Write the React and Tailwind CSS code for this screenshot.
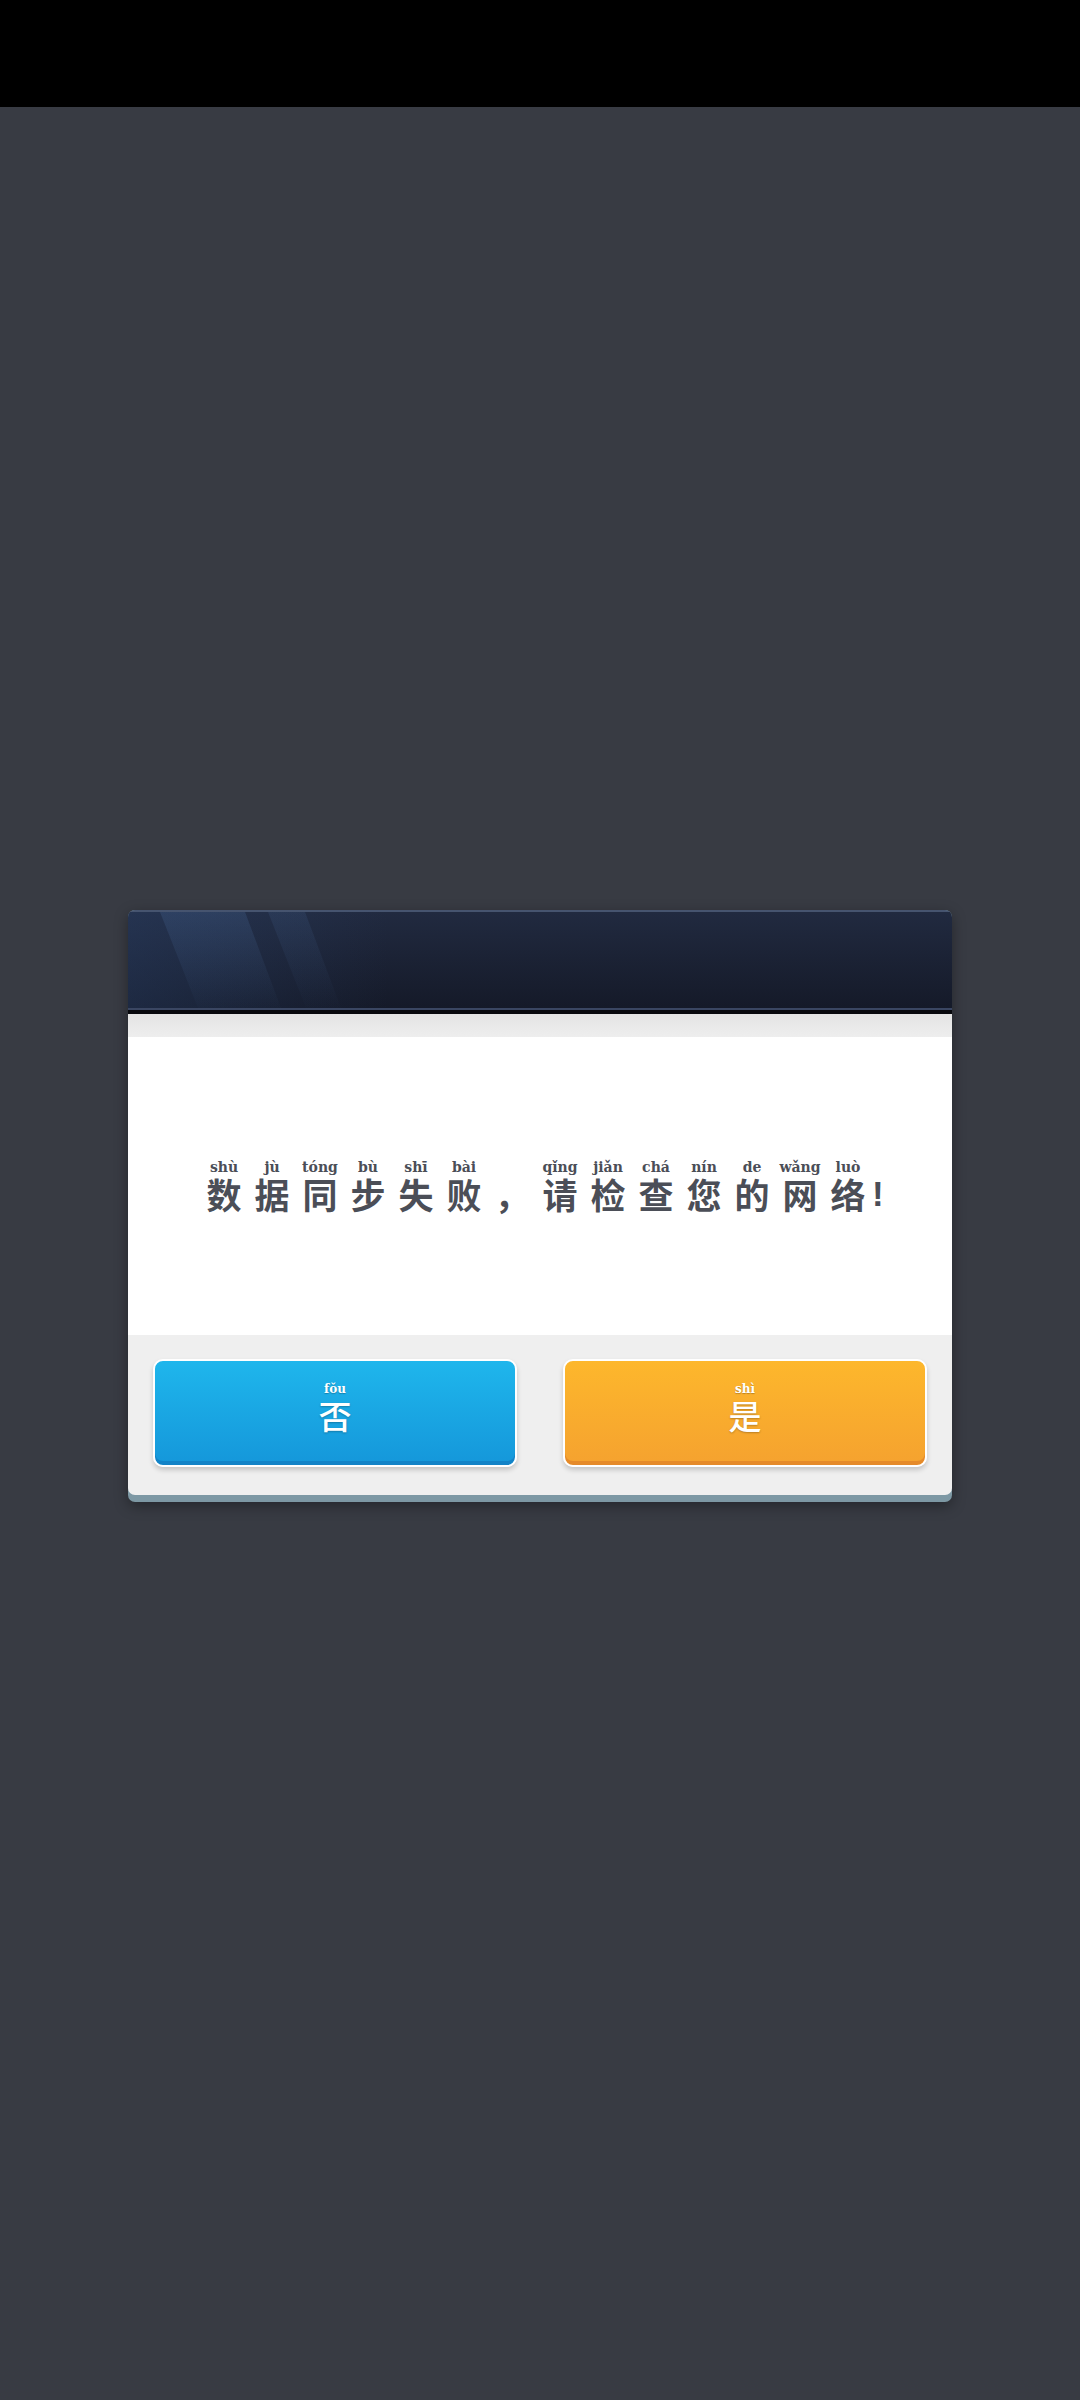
import React from "react";

const mainText = [
  ["数", "shù"],
  ["据", "jù"],
  ["同", "tóng"],
  ["步", "bù"],
  ["失", "shī"],
  ["败", "bài"],
  ["，", ""],
  ["请", "qǐng"],
  ["检", "jiǎn"],
  ["查", "chá"],
  ["您", "nín"],
  ["的", "de"],
  ["网", "wǎng"],
  ["络", "luò"],
];

const cjk = { fontFamily: '"Noto Sans CJK SC", "Noto Sans", sans-serif' };
const pinyinFont = { fontFamily: '"DejaVu Serif", "Liberation Serif", serif' };

function RubyCell({ ch, py }) {
  return (
    <div className="flex w-[48px] flex-col items-center">
      <span
        className="h-[16px] whitespace-nowrap text-[14px] font-bold leading-[14px] text-[#4b4e57]"
        style={pinyinFont}
      >
        {py}
      </span>
      <span
        className="text-[35px] font-bold leading-[35px] text-[#4b4e57]"
        style={cjk}
      >
        {ch}
      </span>
    </div>
  );
}

function Button({ ch, py, color }) {
  const cls =
    color === "blue"
      ? "bg-gradient-to-b from-[#1fb6ec] to-[#1597da] shadow-[inset_0_-4px_0_#1383c7,0_3px_5px_rgba(0,0,0,0.18)]"
      : "bg-gradient-to-b from-[#fdb72c] to-[#f5a22f] shadow-[inset_0_-4px_0_#e58a2a,0_3px_5px_rgba(0,0,0,0.18)]";
  return (
    <div
      className={`flex h-[108px] w-[364px] flex-col items-center justify-center rounded-[10px] border-2 border-white pb-[12px] ${cls}`}
    >
      <span
        className="text-[12px] font-bold leading-[13px] text-white [text-shadow:0_1px_1px_rgba(0,0,0,0.25)]"
        style={pinyinFont}
      >
        {py}
      </span>
      <span
        className="mt-[2px] text-[33px] font-medium leading-[34px] text-white [text-shadow:0_1px_2px_rgba(0,0,0,0.25)]"
        style={cjk}
      >
        {ch}
      </span>
    </div>
  );
}

export default function App() {
  return (
    <div className="flex h-[2400px] w-[1080px] flex-col bg-[#383b43]">
      <div className="h-[107px] w-full bg-black" />
      <div className="flex justify-center pt-[803px]">
        <div className="w-[824px] rounded-[7px] bg-[#7d98a4] pb-[7px] shadow-[0_4px_14px_rgba(0,0,0,0.35)]">
          <div className="overflow-hidden rounded-[7px]">
            {/* Header */}
            <div className="relative h-[98px] border-t-2 border-[#46546f] bg-gradient-to-b from-[#212a40] to-[#151a29]">
              <svg
                className="absolute inset-0"
                width="824"
                height="96"
                viewBox="0 0 824 96"
              >
                <defs>
                  <linearGradient id="g1" x1="0" y1="0" x2="0" y2="1">
                    <stop offset="0" stopColor="#4f74a8" stopOpacity="0.22" />
                    <stop offset="1" stopColor="#4f74a8" stopOpacity="0.02" />
                  </linearGradient>
                  <linearGradient id="g2" x1="0" y1="0" x2="0" y2="1">
                    <stop offset="0" stopColor="#4f74a8" stopOpacity="0.15" />
                    <stop offset="1" stopColor="#4f74a8" stopOpacity="0.01" />
                  </linearGradient>
                  <linearGradient id="g0" x1="0" y1="0" x2="1" y2="0">
                    <stop offset="0" stopColor="#2d4670" stopOpacity="0.35" />
                    <stop offset="1" stopColor="#2d4670" stopOpacity="0" />
                  </linearGradient>
                </defs>
                <rect x="0" y="0" width="260" height="96" fill="url(#g0)" />
                <polygon points="32,0 117,0 153,96 70,96" fill="url(#g1)" />
                <polygon points="140,0 177,0 213,96 178,96" fill="url(#g2)" />
              </svg>
            </div>
            <div className="h-[2px] bg-[#3a4662]" />
            <div className="h-[4px] bg-[#08090e]" />
            {/* Grey strip */}
            <div className="h-[23px] bg-gradient-to-b from-[#e4e4e4] to-[#eeeeee]" />
            {/* Body */}
            <div className="flex h-[298px] items-center justify-center bg-white pb-[2px] pl-[4px]">
              <div className="flex items-start">
                {mainText.map(([ch, py], i) => (
                  <RubyCell key={i} ch={ch} py={py} />
                ))}
                <div className="flex w-[12px] flex-col">
                  <span className="h-[16px]" />
                  <span
                    className="text-[35px] font-bold leading-[35px] text-[#4b4e57]"
                    style={{ fontFamily: '"Liberation Sans", sans-serif' }}
                  >
                    !
                  </span>
                </div>
              </div>
            </div>
            {/* Footer */}
            <div className="flex h-[160px] justify-between bg-[#efefef] px-[25px] pt-[24px]">
              <Button ch="否" py="fǒu" color="blue" />
              <Button ch="是" py="shì" color="orange" />
            </div>
          </div>
        </div>
      </div>
    </div>
  );
}
